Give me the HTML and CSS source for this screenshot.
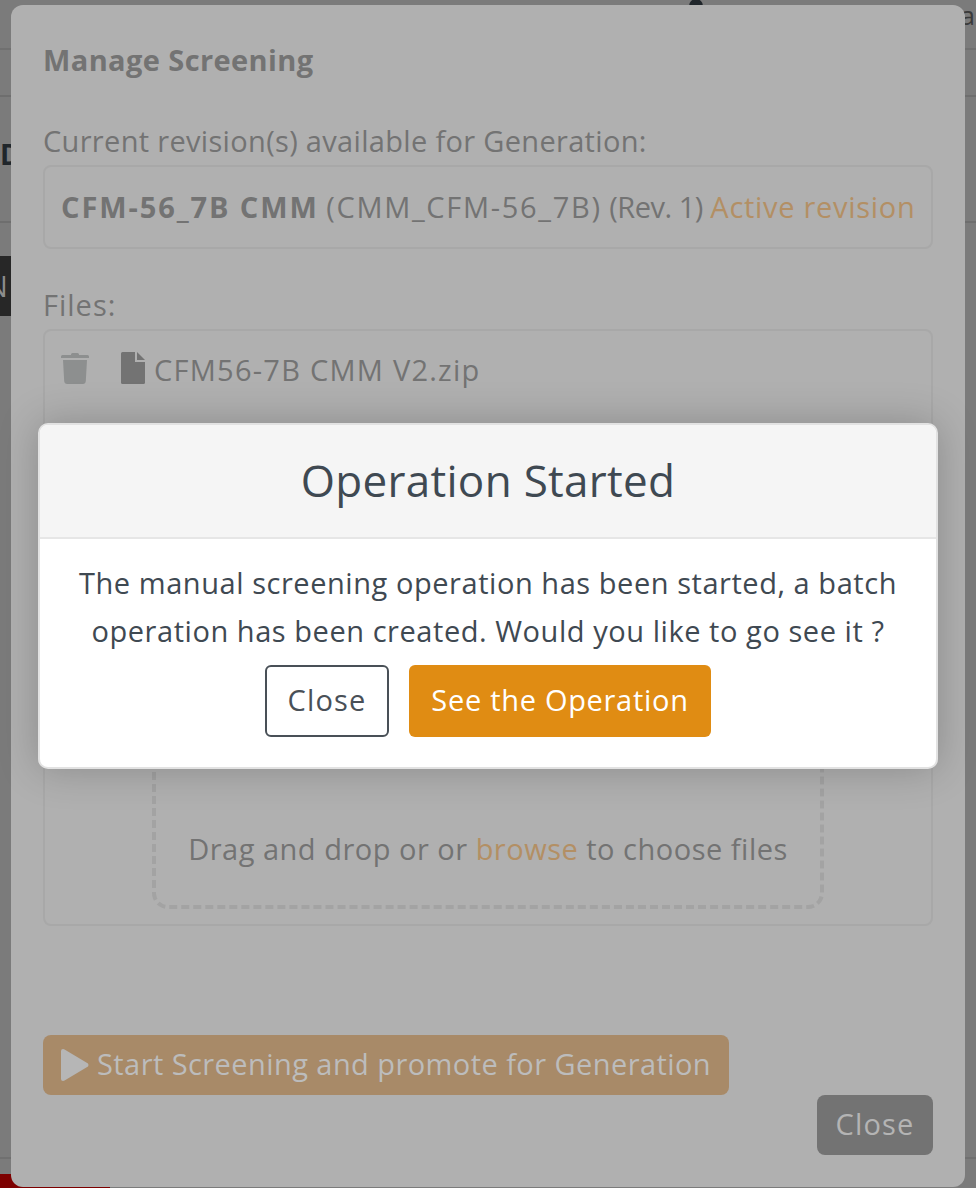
FILE: index.html
```html
<!DOCTYPE html>
<html lang="en">
<head>
  <meta charset="UTF-8" />
  <title>Manage Screening</title>
  <link rel="stylesheet" href="styles.css">
</head>
<body>

  <!-- page behind the dialogs -->
  <div class="page">
    <header class="topbar">
      <span class="avatar"></span>
      <span class="topbar-name">a</span>
    </header>
    <div class="subbar"></div>
    <div class="page-title">D</div>
    <div class="dark-tab">N</div>
    <div class="page-foot"><span class="red-strip"></span></div>
  </div>

  <section class="modal">
    <h2 class="modal-title">Manage Screening</h2>

    <p class="field-label">Current revision(s) available for Generation:</p>
    <div class="panel revision-panel">
      <strong>CFM-56_7B CMM</strong> <span class="rev-code">(CMM_CFM-56_7B)</span> <span class="rev-num">(Rev. 1)</span> <span class="accent active-rev">Active revision</span>
    </div>

    <p class="field-label files-label">Files:</p>
    <div class="panel files-panel">
      <div class="file-row">
        <svg class="icon-trash" viewBox="0 0 28 32"><path d="M10 2.500 Q10 1 11.500 1 H16.500 Q18 1 18 2.500 V3 H26.500 Q28 3 28 4.500 V6 H0 V4.500 Q0 3 1.500 3 H10 Z M2 8 H26 L24.800 29 Q24.600 32 21.800 32 H6.200 Q3.400 32 3.200 29 Z"/></svg>
        <svg class="icon-file" viewBox="0 0 24 32"><path d="M0 1.500 Q0 0 1.500 0 H14 V10 H24 V30.500 Q24 32 22.500 32 H1.500 Q0 32 0 30.500 Z M16 0 L24 8 H16 Z"/></svg>
        <span class="file-name">CFM56-7B CMM V2.zip</span>
      </div>
      <div class="dropzone">
        Drag and drop or or <span class="accent">browse</span> to choose files
      </div>
    </div>

    <div class="modal-actions">
      <button class="btn-start">
        <svg class="icon-play" viewBox="0 0 28 32"><path d="M0 2 Q0 0 2 0 Q3 0 4 .8 L27 14.500 Q28 16 27 17.500 L4 31.200 Q3 32 2 32 Q0 32 0 30 Z"/></svg>
        Start Screening and promote for Generation
      </button>
      <button class="btn-close-muted">Close</button>
    </div>
  </section>

  <section class="popup">
    <h1 class="popup-head">Operation Started</h1>
    <div class="popup-body">
      <p>The manual screening operation has been started, a batch operation has been created. Would you like to go see it ?</p>
      <div class="popup-actions">
        <button class="btn-outline">Close</button>
        <button class="btn-primary">See the Operation</button>
      </div>
    </div>
  </section>

</body>
</html>
```

FILE: styles.css
```css
html, body {
  margin: 0;
  height: 1188px;
  overflow: hidden;
}
body {
  position: relative;
  font-family: 'Open Sans', 'Lato', sans-serif;
  font-size: 29px;
  background-color: #7b7b7b;
  color: #737373;
}
button {
  font-family: inherit;
  font-size: 29px;
  border: 0;
  margin: 0;
  padding: 0 0 3px;
  cursor: pointer;
}
p, h1, h2 {
  margin: 0;
}

/* page behind */
.page {
  height: 1188px;
  display: flex;
  flex-direction: column;
}
.topbar {
  height: 50px;
  flex: none;
  box-sizing: border-box;
  border-bottom: 2px solid #707070;
  position: relative;
  color: #3a3a3a;
  display: flex;
  justify-content: flex-end;
  line-height: 30px;
  padding-right: 1px;
}
.avatar {
  position: absolute;
  left: 689px;
  top: -1px;
  width: 14px;
  height: 14px;
  border-radius: 50%;
  background-color: #20262b;
}
.topbar-name {
  font-size: 26px;
}
.subbar {
  height: 47px;
  flex: none;
  box-sizing: border-box;
  border-bottom: 2px solid #6e6e6e;
}
.page-title {
  height: 126px;
  flex: none;
  box-sizing: border-box;
  border-bottom: 2px solid #6e6e6e;
  font-size: 28px;
  font-weight: bold;
  color: #20262b;
  line-height: 114px;
}
.dark-tab {
  margin-top: 33px;
  width: 11px;
  height: 60px;
  flex: none;
  background-color: #272727;
  color: #8c8c8c;
  line-height: 60px;
  overflow: hidden;
  text-indent: -14px;
}
.page-foot {
  margin-top: auto;
  height: 31px;
  flex: none;
  box-sizing: border-box;
  border-top: 2px solid #707070;
  display: flex;
  align-items: flex-end;
}
.red-strip {
  width: 110px;
  height: 14px;
  background-color: #7d0000;
}

/* large dialog */
.modal {
  position: absolute;
  left: 11px;
  top: 5px;
  width: 954px;
  height: 1182px;
  box-sizing: border-box;
  padding: 35px 32px 0;
  border-radius: 12px;
  background-color: #b0b0b0;
  line-height: 40px;
}
.modal-title {
  font-size: 29px;
  font-weight: bold;
  letter-spacing: 0.4px;
}
.field-label {
  margin-top: 41px;
  letter-spacing: 0.32px;
}
.files-label {
  margin-top: 36px;
  letter-spacing: 1px;
}
.panel {
  box-sizing: border-box;
  border: 2px solid #a8a8a8;
  border-radius: 8px;
  margin-top: 4px;
}
.revision-panel {
  height: 84px;
  padding: 20px 16px;
  white-space: nowrap;
}
.revision-panel strong {
  letter-spacing: 1.9px;
}
.rev-code {
  letter-spacing: 1.7px;
}
.rev-num {
  letter-spacing: -0.5px;
}
.active-rev {
  letter-spacing: 0.7px;
}
.accent {
  color: #b38f64;
}
.files-panel {
  height: 597px;
  padding: 19px 16px 16px;
}
.file-row {
  display: flex;
  align-items: center;
  height: 40px;
}
.file-row svg {
  margin-bottom: 4px;
}
.icon-trash {
  width: 28px;
  height: 32px;
  fill: #8d8f8f;
}
.icon-file {
  width: 24px;
  height: 32px;
  margin-left: 32px;
  fill: #737373;
}
.file-name {
  margin-left: 9px;
  letter-spacing: 1.25px;
}
.dropzone {
  box-sizing: border-box;
  width: 672px;
  height: 340px;
  margin: 179px 0 0 91px;
  border: 4px dashed #a3a3a3;
  border-radius: 16px;
  padding-top: 256px;
  text-align: center;
  white-space: nowrap;
  letter-spacing: 0.5px;
}
.modal-actions {
  margin-top: 109px;
  display: flex;
  flex-direction: column;
  align-items: flex-start;
}
.btn-start {
  height: 60px;
  width: 686px;
  padding: 0 18px 3px;
  background-color: #a88a68;
  color: #bcbcbc;
  border-radius: 8px;
  display: flex;
  align-items: center;
  gap: 8px;
  white-space: nowrap;
  letter-spacing: 0.43px;
}
.icon-play {
  width: 28px;
  height: 32px;
  margin-top: 3px;
  fill: #b6b6b6;
  flex: none;
}
.btn-close-muted {
  align-self: flex-end;
  height: 60px;
  width: 116px;
  background-color: #737373;
  color: #b4b4b4;
  border-radius: 8px;
  letter-spacing: 1.2px;
}

/* confirmation popup */
.popup {
  position: absolute;
  left: 38px;
  top: 423px;
  width: 900px;
  box-sizing: border-box;
  border: 2px solid #e2e2e2;
  border-radius: 10px;
  background-color: #fff;
  box-shadow: 0 0 40px rgba(0, 0, 0, 0.22);
  color: #3f4952;
  overflow: hidden;
}
.popup-head {
  height: 112px;
  background-color: #f5f5f5;
  border-bottom: 2px solid #e6e6e6;
  font-size: 44px;
  font-weight: normal;
  line-height: 110px;
  text-align: center;
  letter-spacing: 0.3px;
}
.popup-body {
  padding: 20px 32px 30px;
  text-align: center;
  line-height: 48px;
  letter-spacing: 0.55px;
}
.popup-actions {
  margin-top: 10px;
  display: flex;
  justify-content: center;
  gap: 20px;
}
.btn-outline {
  height: 72px;
  width: 124px;
  background-color: #fff;
  border: 2px solid #495057;
  border-radius: 6px;
  color: #495057;
  letter-spacing: 1.2px;
}
.btn-primary {
  height: 72px;
  width: 302px;
  background-color: #e08c13;
  border-radius: 6px;
  color: #fff;
  letter-spacing: 0.7px;
}
```
